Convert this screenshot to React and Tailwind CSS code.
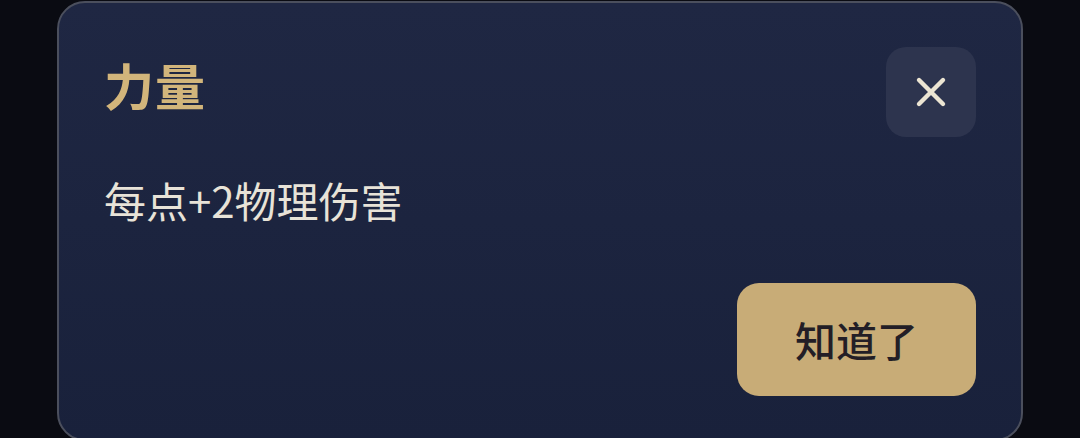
export default function App() {
  return (
    <div
      className="w-[1080px] h-[438px] overflow-hidden bg-[#0a0b12] pl-[57px] pt-px"
      style={{ fontFamily: '"Noto Sans CJK SC", "Noto Sans", sans-serif' }}
    >
      <div className="w-[966px] h-[440px] shrink-0 rounded-[28px] border-2 border-[#4b4f5d] bg-gradient-to-b from-[#1f2743] to-[#19213b] px-[45px] pt-[44px] flex flex-col">
        <div className="flex items-center justify-between h-[90px]">
          <h2 className="text-[50px] leading-[50px] font-bold text-[#d2b57b] mt-[-16px] tracking-[1px]">力量</h2>
          <button className="w-[90px] h-[90px] rounded-[20px] bg-[#2d344e] flex items-center justify-center">
            <svg width="32" height="32" viewBox="0 0 32 32" fill="none">
              <path d="M4 4 L28 28 M28 4 L4 28" stroke="#ece5d3" strokeWidth="4.4" strokeLinecap="round" />
            </svg>
          </button>
        </div>
        <p className="mt-[42px] text-[42px] leading-[42px] text-[#e8e3d8]">每点+2物理伤害</p>
        <div className="mt-[62px] flex justify-end">
          <button className="w-[239px] h-[113px] rounded-[22px] bg-[#c8ac77] text-[41px] font-medium text-[#231e26] flex items-center justify-center">
            知道了
          </button>
        </div>
      </div>
    </div>
  );
}
